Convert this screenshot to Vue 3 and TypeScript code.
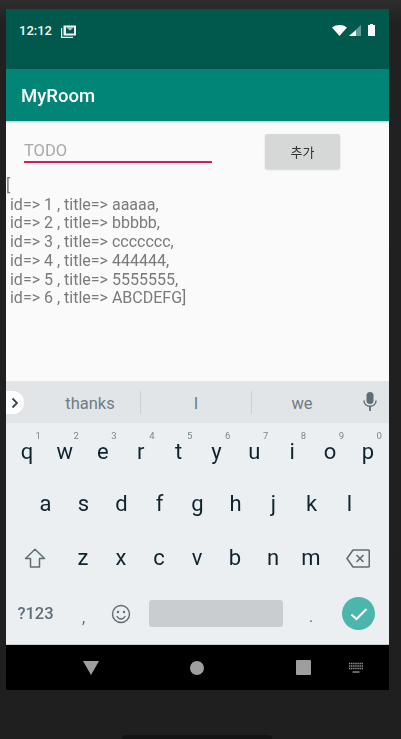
<script setup lang="ts">
const rowOne = [
  { key: 'q', hint: '1' },
  { key: 'w', hint: '2' },
  { key: 'e', hint: '3' },
  { key: 'r', hint: '4' },
  { key: 't', hint: '5' },
  { key: 'y', hint: '6' },
  { key: 'u', hint: '7' },
  { key: 'i', hint: '8' },
  { key: 'o', hint: '9' },
  { key: 'p', hint: '0' },
]
const rowTwo = ['a', 's', 'd', 'f', 'g', 'h', 'j', 'k', 'l']
const rowThree = ['z', 'x', 'c', 'v', 'b', 'n', 'm']

const todos = [
  { id: 1, title: 'aaaaa,' },
  { id: 2, title: 'bbbbb,' },
  { id: 3, title: 'ccccccc,' },
  { id: 4, title: '444444,' },
  { id: 5, title: '5555555,' },
  { id: 6, title: 'ABCDEFG]' },
]
</script>

<template>
  <div class="page">
    <div class="phone">
      <div class="status-bar">
        <div class="status-left">
          <span class="clock">12:12</span>
          <svg class="photo-icon" width="15" height="13" viewBox="0 0 15 13">
            <path d="M.6 3v9.400H12" fill="none" stroke="#e8f2ef" stroke-width="1.200" />
            <path d="M2.500.5H15v10H2.500z" fill="#f0f6f4" />
            <path d="M5 2v6.500h8V2L9 5.500z" fill="#00594c" />
            <path d="M5 2h8L9 5z" fill="#00594c" opacity=".35" />
          </svg>
        </div>
        <div class="status-right">
          <svg width="15" height="11" viewBox="0 0 15 11">
            <path d="M0 2.500C4 -.8 11 -.8 15 2.500L7.500 11z" fill="#fff" />
          </svg>
          <svg width="12" height="11" viewBox="0 0 12 11">
            <path d="M12 0v11H0z" fill="#fff" opacity=".4" />
            <path d="M7 5v6H0z" fill="#fff" />
          </svg>
          <svg class="battery" width="7" height="12" viewBox="0 0 7 12">
            <path d="M2 0h3v1h2v11H0V1h2z" fill="#fff" />
          </svg>
        </div>
      </div>

      <div class="app-bar">MyRoom</div>

      <main class="content">
        <div class="form-row">
          <div class="todo-input">TODO</div>
          <button class="add-btn">추가</button>
        </div>
        <div class="list">
          <div class="bracket">[</div>
          <div v-for="t in todos" :key="t.id" class="list-line"> id=&gt; {{ t.id }} , title=&gt; {{ t.title }}</div>
        </div>
      </main>

      <section class="keyboard">
        <div class="suggestions">
          <div class="chevron-tab">
            <svg width="8" height="12" viewBox="0 0 8 12">
              <path d="M1.500 1.500 6 6l-4.500 4.500" fill="none" stroke="#37474f" stroke-width="1.800" />
            </svg>
          </div>
          <div class="word">thanks</div>
          <div class="word divided">I</div>
          <div class="word">we</div>
          <svg class="mic" width="14" height="20" viewBox="0 0 14 20">
            <rect x="3.500" y="0" width="7" height="12" rx="3.500" fill="#5f6d75" />
            <path d="M1 8.500c0 3.600 2.700 5.800 6 5.800s6-2.200 6-5.800" fill="none" stroke="#5f6d75" stroke-width="1.500" />
            <path d="M7 14v5" stroke="#5f6d75" stroke-width="1.800" />
          </svg>
        </div>

        <div class="key-row row-one">
          <div v-for="k in rowOne" :key="k.key" class="key">
            {{ k.key }}<span class="hint">{{ k.hint }}</span>
          </div>
        </div>

        <div class="key-row row-two">
          <div v-for="k in rowTwo" :key="k" class="key">{{ k }}</div>
        </div>

        <div class="key-row row-three">
          <div class="key wide">
            <svg width="22" height="20" viewBox="0 0 22 20">
              <path d="M11 1.200 1.500 10.500h5V19h9v-8.500h5z" fill="none" stroke="#5f6d75" stroke-width="1.500" stroke-linejoin="round" />
            </svg>
          </div>
          <div v-for="k in rowThree" :key="k" class="key">{{ k }}</div>
          <div class="key wide">
            <svg width="24" height="19" viewBox="0 0 24 19">
              <path d="M7 1h15.500a.8.800 0 0 1 .8.800v15.400a.8.800 0 0 1-.8.800H7L1 9.500z" fill="none" stroke="#5f6d75" stroke-width="1.600" stroke-linejoin="round" />
              <path d="m10.500 6 7 7m0-7-7 7" stroke="#5f6d75" stroke-width="1.600" />
            </svg>
          </div>
        </div>

        <div class="bottom-row">
          <div class="symbols">?123</div>
          <div class="comma">,</div>
          <svg class="emoji" width="20" height="20" viewBox="0 0 20 20">
            <circle cx="10" cy="10" r="8.500" fill="none" stroke="#5f6d75" stroke-width="1.400" />
            <circle cx="7" cy="8" r="1.200" fill="#5f6d75" />
            <circle cx="13" cy="8" r="1.200" fill="#5f6d75" />
            <path d="M5.800 12c1 2 2.500 3 4.200 3s3.200-1 4.200-3" fill="none" stroke="#5f6d75" stroke-width="1.300" />
          </svg>
          <div class="spacebar"></div>
          <div class="period">.</div>
          <div class="enter">
            <svg width="18" height="14" viewBox="0 0 18 14">
              <path d="m1.500 7.500 5 4.500L16.500 2" fill="none" stroke="#fff" stroke-width="2" />
            </svg>
          </div>
        </div>
      </section>

      <nav class="nav-bar">
        <svg class="nav-back" width="16" height="14" viewBox="0 0 16 14"><path d="M0 0h16L8 14z" fill="#9e9e9e" /></svg>
        <div class="nav-home"></div>
        <div class="nav-recent"></div>
        <svg class="nav-kbd" width="16" height="11" viewBox="0 0 16 11">
          <path d="M1 1.500h14M1 4h14M1 6.500h14" stroke="#9e9e9e" stroke-width="1.300" stroke-dasharray="1.300 .8" />
          <path d="M4.500 10h7" stroke="#9e9e9e" stroke-width="1.300" />
        </svg>
      </nav>
    </div>
    <div class="device-edge"></div>
  </div>
</template>

<style scoped>
.page {
  width: 401px;
  height: 739px;
  overflow: hidden;
  box-sizing: border-box;
  padding: 9px 12px 0 6px;
  background: linear-gradient(#2d2d2d 0, #212121 24px, #1f1f1f 100%);
  font-family: Roboto, "Liberation Sans", sans-serif;
}
.phone {
  width: 383px;
  height: 681px;
  display: flex;
  flex-direction: column;
  filter: blur(0.35px);
}

.status-bar {
  height: 60px;
  flex: none;
  box-sizing: border-box;
  padding: 14px 14px 0 13px;
  display: flex;
  justify-content: space-between;
  align-items: flex-start;
  background: #00594c;
  color: #f2f7f6;
}
.status-left {
  display: flex;
  align-items: center;
  gap: 9px;
}
.clock {
  font-size: 13px;
  font-weight: 500;
  line-height: 16px;
}
.status-right {
  display: flex;
  align-items: center;
  gap: 2px;
  padding-top: 1px;
}
.battery {
  margin-left: 5px;
}

.app-bar {
  height: 52px;
  flex: none;
  box-sizing: border-box;
  padding: 2px 0 0 15px;
  display: flex;
  align-items: center;
  background: #008577;
  color: #fff;
  font-size: 18.500px;
  font-weight: 500;
  box-shadow: 0 1px 2px rgba(0, 0, 0, 0.25);
  position: relative;
}

.content {
  flex: 1;
  background: #fafafa;
  min-height: 0;
}
.form-row {
  display: flex;
  align-items: flex-start;
  padding: 13px 0 0 18px;
}
.todo-input {
  width: 188px;
  height: 29px;
  box-sizing: border-box;
  padding-top: 7px;
  border-bottom: 2px solid #d81b60;
  color: #a8a8a8;
  font-size: 16.500px;
  line-height: 19px;
}
.add-btn {
  width: 75px;
  height: 35px;
  margin-left: 53px;
  border: none;
  border-radius: 2px;
  background: #d6d7d7;
  color: #333;
  font-family: "Noto Sans CJK KR", sans-serif;
  font-size: 13px;
  box-shadow: 0 1px 2px rgba(0, 0, 0, 0.15);
}
.list {
  margin-top: 8px;
  color: #7a7a7a;
  font-size: 16px;
  line-height: 18.700px;
}
.bracket,
.list-line {
  white-space: pre;
}

.keyboard {
  height: 264px;
  flex: none;
  box-sizing: border-box;
  background: #eceff1;
  border-bottom: 1px solid #c9cdd0;
  color: #10242e;
}
.suggestions {
  height: 42px;
  box-sizing: border-box;
  padding-left: 34px;
  display: grid;
  grid-template-columns: 100px 112px 100px 1fr;
  align-items: center;
  position: relative;
  background: #e2e5e8;
  color: #6f7c83;
  font-size: 16.500px;
}
.chevron-tab {
  position: absolute;
  left: 0;
  top: 10px;
  width: 18px;
  height: 23px;
  display: flex;
  align-items: center;
  justify-content: center;
  background: #fff;
  border-radius: 0 12px 12px 0;
}
.word {
  height: 23px;
  line-height: 25px;
  text-align: center;
}
.divided {
  border-left: 1px solid #ccd0d3;
  border-right: 1px solid #ccd0d3;
}
.mic {
  position: absolute;
  right: 12px;
  top: 11px;
}

.key-row {
  height: 55px;
  display: grid;
  align-items: center;
}
.row-one {
  grid-template-columns: repeat(10, 37.900px);
  padding: 2px 0 0 2px;
  box-sizing: border-box;
}
.row-two {
  grid-template-columns: repeat(9, 38px);
  justify-content: center;
  height: 52px;
}
.row-three {
  grid-template-columns: 58px repeat(7, 38px) 1fr;
  height: 56px;
}
.key {
  position: relative;
  text-align: center;
  font-size: 22px;
  line-height: 26px;
}
.wide {
  display: flex;
  justify-content: center;
}
.row-three .wide:last-child {
  padding-right: 4px;
}
.hint {
  position: absolute;
  top: -9px;
  right: 5px;
  font-size: 9.500px;
  line-height: 11px;
  color: #7b878d;
}

.bottom-row {
  height: 55px;
  position: relative;
  display: flex;
  align-items: center;
  color: #5f6d75;
}
.symbols {
  width: 59px;
  text-align: center;
  font-size: 16.500px;
  font-weight: 500;
}
.comma {
  width: 37px;
  font-size: 16px;
  text-align: center;
  padding-top: 8px;
}
.emoji {
  flex: none;
  margin: 0 0 0 9px;
}
.spacebar {
  width: 134px;
  height: 27px;
  margin-left: 18px;
  border-radius: 3px;
  background: #c9cdd0;
}
.period {
  width: 56px;
  text-align: center;
  font-size: 16px;
  padding-top: 6px;
}
.enter {
  width: 33px;
  height: 33px;
  border-radius: 50%;
  margin-left: 3px;
  display: flex;
  align-items: center;
  justify-content: center;
  background: #4db6ac;
}

.nav-bar {
  height: 45px;
  flex: none;
  position: relative;
  display: flex;
  align-items: center;
  background: #000;
}
.nav-back {
  margin-left: 77px;
}
.nav-home {
  width: 14px;
  height: 14px;
  margin-left: 91px;
  border-radius: 50%;
  background: #9e9e9e;
}
.nav-recent {
  width: 15px;
  height: 15px;
  margin-left: 92px;
  border-radius: 1px;
  background: #9e9e9e;
}
.nav-kbd {
  margin-left: 37px;
}

.device-edge {
  width: 150px;
  height: 4px;
  margin: 45px 0 0 116px;
  border-radius: 4px 4px 0 0;
  background: #141414;
}
</style>
